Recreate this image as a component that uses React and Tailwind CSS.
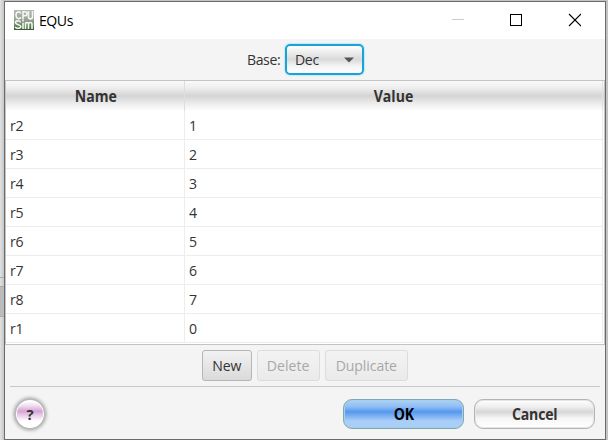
const rows = [
  ['r2', '1'], ['r3', '2'], ['r4', '3'], ['r5', '4'],
  ['r6', '5'], ['r7', '6'], ['r8', '7'], ['r1', '0'],
];

function AppIcon() {
  return (
    <svg width="20" height="20" viewBox="0 0 20 20" className="shrink-0">
      <defs>
        <linearGradient id="chip" x1="0" y1="0" x2="0" y2="1">
          <stop offset="0" stopColor="#b4b9b2" />
          <stop offset="0.5" stopColor="#98a294" />
          <stop offset="0.8" stopColor="#5f8054" />
          <stop offset="1" stopColor="#3a5534" />
        </linearGradient>
      </defs>
      <rect width="20" height="20" fill="url(#chip)" />
      <g fill="none" stroke="#f4f6f4" strokeWidth="1.6">
        <path d="M6.800 3.500C5.500 1 2 1.500 2 5.200S5.500 9.500 7 7.500M9 9.500V1.800h2c2.500 0 2.500 4 0 4h-2M14.500 1v6c0 2.500 4 2.500 4 0v-6" />
        <path d="M6.500 12.500C5.500 10 1.500 10.500 1.500 12.700S6.800 14.500 6.800 16.500 3 19 1 17M9 12.800V19M9 10v1.500M11.500 19v-6.500M11.500 14c0-2 3-2 3 0v5M14.500 14c0-2 3.500-2 3.500 0v5" />
      </g>
    </svg>
  );
}

function Label({ children, className = '' }) {
  return <span className={`inline-block text-[15.3px] leading-none scale-x-[0.92] ${className}`}>{children}</span>;
}

function TitleBar() {
  return (
    <div className="flex h-[37px] shrink-0 items-center bg-white pl-[9px]">
      <div className="pb-px"><AppIcon /></div>
      <Label className="ml-[5px] origin-left tracking-[-0.5px] text-black">EQUs</Label>
      <svg className="mb-[2px] ml-auto mr-[24px]" width="130" height="14" viewBox="0 0 130 14" fill="none" shapeRendering="crispEdges">
        <path d="M1 6.5h12" stroke="#cccccc" />
        <rect x="59.5" y="1.5" width="11" height="11" stroke="#000" />
        <path d="M118 1l12 12M130 1l-12 12" stroke="#000" strokeWidth="1.1" shapeRendering="auto" />
      </svg>
    </div>
  );
}

const headFill = 'bg-[linear-gradient(to_bottom,#fafafa_0%,#eeeeee_22%,#d4d4d4_50%,#e6e6e6_68%,#ffffff_100%)]';

export default function App() {
  return (
    <div className="flex h-[440px] w-[608px] overflow-hidden bg-[#c4c4c4] font-['Open_Sans','Noto_Sans',sans-serif] text-[15px] text-[#333]">
      <div className="flex w-1 shrink-0 flex-col bg-linear-to-r from-[#e2e2e2] to-[#c6c6c6]">
        <div className="mt-[277px] h-[10px] border-y border-[#aaa]" />
        <div className="h-[30px] border-b border-[#aaa] bg-[#bcbcbc]" />
      </div>
      <div className="mt-px flex h-[439px] w-[602px] shrink-0 flex-col border border-[#6b6b6b] bg-[#f4f4f4]">
        <TitleBar />
        <div className="flex h-[41px] shrink-0 items-center justify-center gap-[5px]">
          <Label className="-ml-[2px] mt-px origin-right tracking-[-0.4px]">Base:</Label>
          <div className="flex h-[31px] w-[79px] items-center justify-between rounded-[5px] border-2 border-[#1aa3d6] bg-[linear-gradient(to_bottom,#ffffff,#ececec_25%,#dadada_50%,#f4f4f4_75%,#ffffff)] pl-2 pr-[8px] shadow-[0_0_1px_1px_#c8e8f4]">
            <Label className="mt-px origin-left tracking-[-0.4px]">Dec</Label>
            <svg width="10" height="6" viewBox="0 0 10 6"><path d="M0 0.5h10L5 5.5z" fill="#555" /></svg>
          </div>
        </div>
        <div className="flex h-[265px] shrink-0 flex-col border border-[#c3c3c3] bg-white">
          <div className={`flex h-[30px] shrink-0 items-center pr-px font-bold ${headFill}`}>
            <div className="flex h-full w-[179px] items-center justify-center border-r border-[#dedede] pl-[2px] pt-[2px]"><Label>Name</Label></div>
            <div className="flex h-full flex-1 items-center justify-center border-r border-[#e2e2e2] pt-[2px]"><Label>Value</Label></div>
          </div>
          {rows.map(([name, value]) => (
            <div key={name} className="mr-px flex h-[29px] shrink-0 items-center border-b border-r border-[#ededed]">
              <div className="flex h-full w-[179px] items-center border-r border-[#ededed] pl-1 pt-px"><Label className="origin-left tracking-[-0.4px]">{name}</Label></div>
              <div className="flex h-full items-center pl-1 pt-px"><Label className="origin-left">{value}</Label></div>
            </div>
          ))}
        </div>
        <div className="flex h-[41px] shrink-0 items-center justify-center gap-[5px]">
          <button className="flex h-[31px] w-[50px] items-center justify-center rounded-[3px] border border-[#b5b5b5] bg-linear-to-b from-[#f2f2f2] to-[#dadada] pt-px"><Label className="tracking-[-0.2px]">New</Label></button>
          <button className="flex h-[31px] w-[63px] items-center justify-center rounded-[3px] border border-[#dcdcdc] bg-linear-to-b from-[#f3f3f3] to-[#eaeaea] pt-px text-[#a8a8a8]"><Label>Delete</Label></button>
          <button className="flex h-[31px] w-[83px] items-center justify-center rounded-[3px] border border-[#dcdcdc] bg-linear-to-b from-[#f3f3f3] to-[#eaeaea] pt-px text-[#a8a8a8]"><Label className="tracking-[-0.1px]">Duplicate</Label></button>
        </div>
        <div className="mx-[5px] h-px shrink-0 bg-[#c8c8c8]" />
        <div className="flex flex-1 items-center gap-[10px] pl-[9px] pr-[10px] pt-[2px] font-bold">
          <button className="flex size-[32px] items-center justify-center rounded-full border-2 border-[#b9b9b9] bg-[linear-gradient(to_bottom,#ffffff_5%,#efd9ee_22%,#d6a2d4_40%,#e6c6e5_52%,#ffffff_75%)] text-[15px] shadow-[0_0_3px_1px_#bbb,inset_0_0_0_1px_#fff]">?</button>
          <button className="ml-auto flex h-[30px] w-[121px] items-center justify-center rounded-[9px] border border-[#7fa6b4] bg-[linear-gradient(to_bottom,#b0d2f8,#8dbcf4_25%,#5598ee_42%,#90bdf4_65%,#a9cef8_75%,#a9cef8)] pt-[2px] text-black shadow-[inset_0_0_0_1px_#a8d0e4]"><Label className="tracking-[-0.3px]">OK</Label></button>
          <button className="flex h-[30px] w-[121px] items-center justify-center rounded-[9px] border border-[#b4b4b4] bg-[linear-gradient(to_bottom,#ffffff,#eeeeee_25%,#d6d6d6_43%,#f6f6f6_65%,#ffffff)] pt-[2px] shadow-[inset_0_0_0_1px_#e6e6e6]"><Label className="tracking-[-0.2px]">Cancel</Label></button>
        </div>
      </div>
    </div>
  );
}
